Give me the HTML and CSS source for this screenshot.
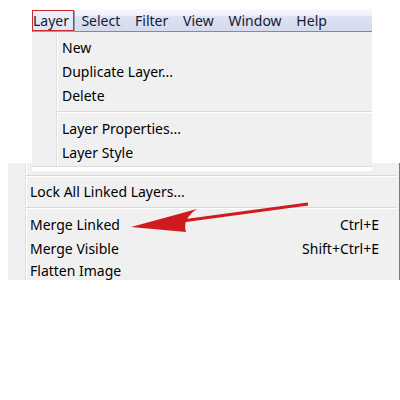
FILE: index.html
```html
<!DOCTYPE html>
<html>
<head>
<meta charset="utf-8">
<link rel="stylesheet" href="styles.css">
</head>
<body>
<div class="shot-top">
  <div class="menubar">
    <span class="mb-item active">Layer</span>
    <span class="mb-item">Select</span>
    <span class="mb-item">Filter</span>
    <span class="mb-item">View</span>
    <span class="mb-item">Window</span>
    <span class="mb-item">Help</span>
  </div>
  <div class="dropdown">
    <div class="item">New</div>
    <div class="item">Duplicate Layer...</div>
    <div class="item">Delete</div>
    <div class="sep"></div>
    <div class="item">Layer Properties...</div>
    <div class="item">Layer Style</div>
  </div>
</div>
<div class="shot-bottom">
  <div class="sep"></div>
  <div class="item">Lock All Linked Layers...</div>
  <div class="sep"></div>
  <div class="item"><span>Merge Linked</span><span class="key">Ctrl+E</span></div>
  <div class="item"><span>Merge Visible</span><span class="key">Shift+Ctrl+E</span></div>
  <div class="item last"><span>Flatten Image</span></div>
</div>
<svg class="arrow" width="400" height="400" viewBox="0 0 400 400">
  <line x1="182" y1="221" x2="308" y2="204" stroke="#d11a1f" stroke-width="3"/>
  <path d="M131 227 L197 209 Q182 219 186 232 Z" fill="#d11a1f"/>
</svg>
</body>
</html>
```
FILE: styles.css
```css
html, body {
  margin: 0;
  padding: 0;
  background: #fff;
}
body {
  position: relative;
  width: 400px;
  height: 400px;
  overflow: hidden;
  font-family: "Noto Sans", "Open Sans", sans-serif;
  font-size: 14px;
  color: #000;
}
.shot-top {
  position: relative;
  z-index: 1;
  width: 340px;
  margin: 9px 0 0 32px;
  padding-bottom: 4px;
  background: #fff;
}
.menubar {
  display: flex;
  align-items: center;
  height: 22px;
  border-bottom: 1px solid #8a8a8a;
  background: linear-gradient(#f7f8fc 0, #edf0f8 30%, #dde3f2 34%, #d5dbee 100%);
  color: #141a33;
}
.mb-item {
  padding: 0 7.4px;
  line-height: 19px;
}
.mb-item.active {
  padding: 0 6px 0 0;
  width: 34px;
  border: 1px solid #cc2a30;
  box-shadow: 1px 1px 0 #9a9aa8;
  background: linear-gradient(#eef1f9, #dfe5f4);
  margin-top: 1px;
}
.dropdown {
  padding: 3px 0 2px;
  border-bottom: 1px solid #dadada;
  background:
    linear-gradient(to right, transparent 24px, #e0e0e0 24px, #e0e0e0 25px, #fff 25px, #fff 26px, transparent 26px),
    #f0f0f0;
}
.item {
  display: flex;
  justify-content: space-between;
  align-items: center;
  height: 24px;
  line-height: 17px;
  padding-left: 30px;
}
.sep {
  height: 0;
  margin: 4px 0 3px 25px;
  border-top: 1px solid #dadada;
  border-bottom: 1px solid #fff;
}
.shot-bottom {
  margin: -8px 0 0 8px;
  width: 391px;
  height: 117px;
  overflow: hidden;
  border-right: 1px solid #7a7a7a;
  background:
    linear-gradient(to right, transparent 17px, #e0e0e0 17px, #e0e0e0 18px, #fff 18px, #fff 19px, transparent 19px),
    #f0f0f0;
}
.shot-bottom .item {
  padding-left: 22px;
  padding-right: 20px;
}
.shot-bottom .item.last {
  height: 19px;
  align-items: flex-end;
}
.shot-bottom .sep {
  margin: 4px 2px 3px 18px;
}
.shot-bottom .sep:first-child {
  margin-top: 12px;
  margin-bottom: 2px;
}
.arrow {
  position: absolute;
  left: 0;
  top: 0;
  z-index: 2;
}
```
